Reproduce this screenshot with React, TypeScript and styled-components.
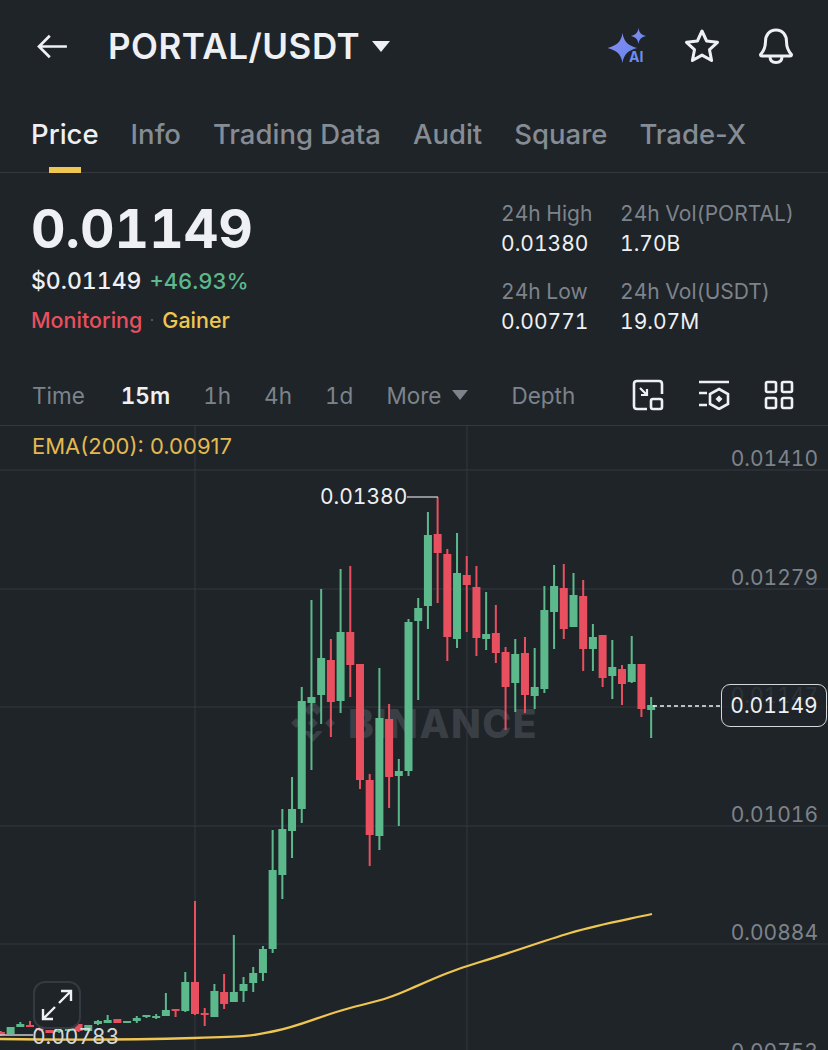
import styled, { createGlobalStyle } from "styled-components";

type Candle = [number, number, number, number, "g" | "r"];

const GREEN = "#5cb98c";
const RED = "#e8505f";
const YELLOW = "#efc651";

// wick top, wick bottom, body top, body bottom, in page pixels
const candles: Candle[] = [
  [1031, 1036, 1032, 1035, "r"], [1027, 1034, 1027, 1034, "g"], [1022, 1027, 1024, 1027, "g"], [1021, 1027, 1025, 1027, "r"],
  [1027, 1031, 1028, 1030, "r"], [1030, 1033, 1030, 1033, "r"], [1029, 1033, 1030, 1032, "g"], [1028, 1032, 1029, 1031, "g"],
  [1024, 1032, 1024, 1031, "r"], [1025, 1031, 1025, 1031, "g"], [1020, 1025, 1021, 1024, "g"], [1015, 1023, 1020, 1023, "g"],
  [1019, 1023, 1019, 1023, "r"], [1021, 1023, 1021, 1023, "g"], [1016, 1023, 1018, 1021, "g"], [1015, 1018, 1015, 1017, "g"],
  [1014, 1019, 1016, 1018, "g"], [993, 1016, 1010, 1016, "g"], [1009, 1017, 1009, 1011, "r"], [972, 1012, 982, 1011, "g"],
  [901, 1015, 982, 1014, "r"], [1008, 1026, 1013, 1015, "r"], [984, 1017, 991, 1017, "g"], [974, 1009, 992, 1004, "r"],
  [935, 1002, 992, 1002, "g"], [977, 1002, 984, 991, "g"], [967, 992, 973, 983, "g"], [946, 981, 949, 973, "g"],
  [830, 953, 870, 949, "g"], [809, 899, 829, 875, "g"], [777, 858, 809, 831, "g"], [687, 823, 701, 809, "g"],
  [600, 770, 697, 703, "g"], [589, 724, 658, 695, "g"], [639, 737, 660, 702, "r"], [569, 713, 632, 701, "g"],
  [566, 697, 632, 665, "r"], [664, 789, 664, 780, "r"], [774, 866, 780, 835, "r"], [668, 850, 718, 836, "g"],
  [704, 808, 719, 777, "r"], [759, 826, 771, 776, "g"], [619, 776, 622, 771, "g"], [598, 700, 608, 621, "g"],
  [512, 629, 535, 606, "g"], [497, 603, 534, 553, "r"], [549, 661, 554, 637, "r"], [533, 648, 573, 639, "g"],
  [556, 632, 575, 585, "r"], [566, 656, 587, 638, "r"], [592, 650, 634, 639, "g"], [605, 663, 633, 653, "r"],
  [647, 730, 652, 687, "r"], [639, 712, 654, 683, "g"], [637, 713, 653, 695, "r"], [648, 709, 687, 696, "g"],
  [586, 693, 610, 689, "g"], [565, 649, 586, 612, "g"], [564, 639, 588, 629, "r"], [573, 627, 595, 627, "g"],
  [580, 671, 596, 649, "r"], [624, 671, 637, 649, "g"], [635, 687, 635, 678, "r"], [640, 699, 667, 676, "g"],
  [665, 705, 669, 684, "r"], [636, 683, 664, 682, "g"], [664, 717, 664, 709, "r"], [697, 738, 705, 710, "g"],
];

const tabs = ["Price", "Info", "Trading Data", "Audit", "Square", "Trade-X"];
const intervals = ["Time", "15m", "1h", "4h", "1d"];
const axisLabels = ["0.01410", "0.01279", "0.01147", "0.01016", "0.00884", "0.00753"];

const GlobalStyle = createGlobalStyle`
  html, body {
    margin: 0;
    background: #1f2429;
  }
  body {
    font-family: Inter, "Noto Sans", sans-serif;
    font-variant-numeric: tabular-nums;
  }
`;

export default function App() {
  return (
    <>
      <GlobalStyle />
      <Page>
        <Header>
          <BackButton viewBox="0 0 36 30">
            <path d="M34 15H3M15 3 3 15l12 12" />
          </BackButton>
          <Pair>PORTAL/USDT</Pair>
          <PairCaret />
          <HeaderIcons>
            <AiIcon viewBox="0 0 42 36">
              <defs>
                <linearGradient id="ai" x1="0" y1="0" x2="1" y2="1">
                  <stop offset="0" stopColor="#8f8cf0" />
                  <stop offset="1" stopColor="#5f86ee" />
                </linearGradient>
              </defs>
              <path d="M15.500 5c1.500 9 5.500 12.500 14.500 15-9 2.500-13 6-14.500 15-1.500-9-5.500-12.500-15-15 9.500-2.500 13.500-6 15-15Z" fill="url(#ai)" />
              <path d="M31.500 0c.8 5 3 7 7.500 8-4.500 1-6.700 3-7.500 8-.8-5-3-7-7.500-8 4.500-1 6.700-3 7.500-8Z" fill="url(#ai)" />
              <text x="22" y="34" fontFamily="Inter, sans-serif" fontSize="14" fontWeight="700" fill="#6f8cf0">AI</text>
            </AiIcon>
            <svg width="36" height="36" viewBox="0 0 36 36" fill="none" stroke="#eef0f3" strokeWidth="3" strokeLinejoin="round">
              <path d="m18 3 4.600 10 10.900 1.300-8 7.400 2.100 10.800L18 27.100 8.400 32.500l2.100-10.800-8-7.400L13.400 13 18 3Z" />
            </svg>
            <svg width="36" height="38" viewBox="0 0 36 38" fill="none" stroke="#eef0f3" strokeWidth="3" strokeLinejoin="round">
              <path d="M18 3c-7 0-10.500 5.500-10.500 11.500 0 7-2 10-5 13 0 1 .5 1.500 1.500 1.500h28c1 0 1.500-.5 1.500-1.500-3-3-5-6-5-13C28.500 8.500 25 3 18 3Z" />
              <path d="M12 29.500c0 4 2.500 6 6 6s6-2 6-6" />
            </svg>
          </HeaderIcons>
        </Header>

        <TabBar>
          {tabs.map((tab, i) => (
            <Tab key={tab} $active={i === 0}>{tab}</Tab>
          ))}
        </TabBar>

        <Summary>
          <PriceBlock>
            <LastPrice>0.01149</LastPrice>
            <PriceLine>
              <span>$0.01149</span>
              <Change>+46.93%</Change>
            </PriceLine>
            <TagLine>
              <RedTag>Monitoring</RedTag>
              <TagDot />
              <YellowTag>Gainer</YellowTag>
            </TagLine>
          </PriceBlock>
          <Stats>
            <Stat><StatLabel>24h High</StatLabel><StatValue>0.01380</StatValue></Stat>
            <Stat><StatLabel>24h Vol(PORTAL)</StatLabel><StatValue>1.70B</StatValue></Stat>
            <Stat><StatLabel>24h Low</StatLabel><StatValue>0.00771</StatValue></Stat>
            <Stat><StatLabel>24h Vol(USDT)</StatLabel><StatValue>19.07M</StatValue></Stat>
          </Stats>
        </Summary>

        <Toolbar>
          {intervals.map((item) => (
            <Interval key={item} $active={item === "15m"}>{item}</Interval>
          ))}
          <Interval>
            More<MoreCaret />
          </Interval>
          <Depth>Depth</Depth>
          <ToolIcons>
            <svg width="32" height="32" viewBox="0 0 32 32" fill="none" stroke="#eef0f3" strokeWidth="2.600">
              <path d="M15 30H5q-3 0-3-3V5q0-3 3-3h22q3 0 3 3v10" />
              <path d="M8 9l7 7M15 10v6H9" strokeWidth="2.200" />
              <rect x="19" y="20" width="11" height="10" rx="2" />
            </svg>
            <svg width="32" height="30" viewBox="0 0 32 30" fill="none" stroke="#eef0f3" strokeWidth="2.600">
              <path d="M1 2h30M1 13h8M1 25h8" />
              <path d="m21 9 9 5v10l-9 5-9-5V14l9-5Z" />
              <path d="m21 15.500 3.500 3.500-3.500 3.500-3.500-3.500 3.500-3.500Z" fill="#eef0f3" stroke="none" />
            </svg>
            <svg width="30" height="30" viewBox="0 0 30 30" fill="none" stroke="#eef0f3" strokeWidth="2.600" strokeLinejoin="round">
              <rect x="2" y="2" width="10" height="10" rx="1.500" />
              <rect x="18" y="2" width="10" height="10" rx="1.500" />
              <rect x="2" y="18" width="10" height="10" rx="1.500" />
              <rect x="18" y="18" width="10" height="10" rx="1.500" />
            </svg>
          </ToolIcons>
        </Toolbar>

        <Chart>
          <Watermark>
            <svg width="50" height="50" viewBox="0 0 50 50" fill="#3a3f46">
              <path d="m25 3 9 9-5 5-4-4-4 4-5-5 9-9ZM8 20l5 5-5 5-5-5 5-5ZM42 20l5 5-5 5-5-5 5-5ZM25 20l5 5-5 5-5-5 5-5ZM16 33l5 0 4 4 4-4 5 0 0 1-9 10-9-10 0-1Z" />
            </svg>
            <WatermarkText>BINANCE</WatermarkText>
          </Watermark>
          <ChartSvg viewBox="0 426 828 624">
            {[470, 589, 707, 826, 944].map((y) => (
              <line key={y} x1="0" x2="828" y1={y} y2={y} stroke="#33383f" strokeWidth="1" />
            ))}
            {[195, 467].map((x) => (
              <line key={x} x1={x} x2={x} y1="426" y2="1050" stroke="#33383f" strokeWidth="1" />
            ))}
            <path
              d="M0 1039C60 1040 130 1040 194 1038S250 1036 275 1031 320 1016 350 1008 385 1000 410 989 450 971 480 962 540 942 570 933 625 920 652 914"
              fill="none"
              stroke={YELLOW}
              strokeWidth="2.300"
            />
            {candles.map(([top, bottom, bodyTop, bodyBottom, side], i) => {
              const x = 0.9 + 9.705 * i;
              const fill = side === "g" ? GREEN : RED;
              return (
                <g key={i} fill={fill}>
                  <rect x={x - 1} y={top} width="2" height={bottom - top} />
                  <rect x={x - 4} y={bodyTop} width="8" height={Math.max(bodyBottom - bodyTop, 2)} />
                </g>
              );
            })}
            <path d="M407 497h31" stroke="#c9ccd0" strokeWidth="1.300" />
            <path d="M0 1035h33" stroke="#c9ccd0" strokeWidth="1.300" />
            <path d="M653 706h68" stroke="#eef0f3" strokeWidth="1.300" strokeDasharray="4 3" />
          </ChartSvg>

          <Indicator>EMA(200): 0.00917</Indicator>
          <HighLabel>0.01380</HighLabel>
          <LowLabel>0.00783</LowLabel>
          <Axis>
            {axisLabels.map((label) => (
              <AxisLabel key={label}>{label}</AxisLabel>
            ))}
          </Axis>
          <PriceTag>0.01149</PriceTag>
          <ExpandButton>
            <svg width="32" height="32" viewBox="0 0 32 32" fill="none" stroke="#eef0f3" strokeWidth="2.400">
              <path d="M18 14 30 2M20 2h10v10M14 18 2 30M2 20v10h10" />
            </svg>
          </ExpandButton>
        </Chart>
      </Page>
    </>
  );
}

const Page = styled.div`
  width: 828px;
  height: 1050px;
  overflow: hidden;
  display: flex;
  flex-direction: column;
  background: #1f2429;
  color: #eef0f3;
`;

const Header = styled.header`
  height: 92px;
  flex: none;
  display: flex;
  align-items: center;
  padding: 0 34px 0 36px;
`;

const BackButton = styled.svg`
  width: 33px;
  height: 27px;
  margin-right: 39px;
  fill: none;
  stroke: #eef0f3;
  stroke-width: 3;
`;

const Pair = styled.div`
  font-size: 35px;
  font-weight: 600;
  letter-spacing: 0.5px;
`;

const PairCaret = styled.div`
  width: 0;
  height: 0;
  margin: 0 0 0 12px;
  border-left: 9px solid transparent;
  border-right: 9px solid transparent;
  border-top: 11px solid #eef0f3;
`;

const HeaderIcons = styled.div`
  margin-left: auto;
  display: flex;
  align-items: center;
  gap: 38px;
`;

const AiIcon = styled.svg`
  width: 42px;
  height: 36px;
  margin-right: -3px;
`;

const TabBar = styled.nav`
  height: 81px;
  box-sizing: border-box;
  flex: none;
  display: flex;
  align-items: flex-start;
  gap: 32px;
  padding: 24px 31px 0;
  border-bottom: 1px solid #33383f;
`;

const Tab = styled.div<{ $active?: boolean }>`
  position: relative;
  font-size: 27.500px;
  font-weight: 500;
  font-variant-numeric: normal;
  line-height: 36px;
  color: ${(p) => (p.$active ? "#eef0f3" : "#868c94")};

  &::after {
    content: "";
    display: ${(p) => (p.$active ? "block" : "none")};
    position: absolute;
    left: 18px;
    top: 51px;
    width: 32px;
    height: 6px;
    background: ${YELLOW};
  }
`;

const Summary = styled.section`
  height: 192px;
  flex: none;
  display: flex;
  justify-content: space-between;
  padding: 24px 34px 0 31px;
  box-sizing: border-box;
`;

const PriceBlock = styled.div`
  display: flex;
  flex-direction: column;
`;

const LastPrice = styled.div`
  font-size: 53.500px;
  font-weight: 700;
  line-height: 64px;
`;

const PriceLine = styled.div`
  display: flex;
  align-items: baseline;
  gap: 8px;
  margin-top: 2px;
  font-size: 23px;
  line-height: 36px;
  font-weight: 500;
`;

const Change = styled.span`
  font-size: 22px;
  color: ${GREEN};
`;

const TagLine = styled.div`
  display: flex;
  align-items: center;
  margin-top: 3px;
  font-size: 21.500px;
  font-weight: 500;
  line-height: 36px;
`;

const RedTag = styled.span`
  color: ${RED};
`;

const YellowTag = styled.span`
  color: ${YELLOW};
`;

const TagDot = styled.i`
  width: 2px;
  height: 2px;
  margin: 0 9px;
  background: #50555c;
`;

const Stats = styled.div`
  display: grid;
  grid-template-columns: 119px auto;
  grid-auto-rows: 77.500px;
  margin-top: 3px;
`;

const Stat = styled.div`
  display: flex;
  flex-direction: column;
  gap: 1px;
`;

const StatLabel = styled.span`
  font-size: 21px;
  line-height: 28px;
  color: #7d838b;
`;

const StatValue = styled.span`
  font-size: 21px;
  line-height: 30px;
  color: #eef0f3;
`;

const Toolbar = styled.div`
  height: 61px;
  box-sizing: border-box;
  flex: none;
  display: flex;
  align-items: center;
  gap: 33px;
  padding: 0 34px 0 32px;
  border-bottom: 1px solid #33383f;
`;

const Interval = styled.div<{ $active?: boolean }>`
  display: flex;
  align-items: center;
  font-size: 22.500px;
  font-weight: ${(p) => (p.$active ? 600 : 400)};
  color: ${(p) => (p.$active ? "#eef0f3" : "#7d838b")};

  &:first-child {
    margin-right: 3px;
  }
`;

const MoreCaret = styled.i`
  width: 0;
  height: 0;
  margin-left: 11px;
  border-left: 8px solid transparent;
  border-right: 8px solid transparent;
  border-top: 10px solid #7d838b;
`;

const Depth = styled(Interval)`
  margin-left: 10px;
`;

const ToolIcons = styled.div`
  margin-left: auto;
  display: flex;
  align-items: center;
  gap: 34px;
`;

const Chart = styled.div`
  position: relative;
  flex: 1;
  overflow: hidden;
`;

const ChartSvg = styled.svg`
  position: absolute;
  inset: 0;
  width: 828px;
  height: 624px;
`;

const Watermark = styled.div`
  position: absolute;
  left: 288px;
  top: 272px;
  display: flex;
  align-items: center;
  gap: 10px;
`;

const WatermarkText = styled.span`
  font-size: 39px;
  font-weight: 800;
  letter-spacing: 1.500px;
  color: #3a3f46;
`;

const Indicator = styled.div`
  position: absolute;
  left: 32px;
  top: 6px;
  font-size: 22px;
  font-variant-numeric: normal;
  line-height: 28px;
  color: #e3b950;
`;

const HighLabel = styled.div`
  position: absolute;
  left: 320px;
  top: 58px;
  font-size: 21px;
  line-height: 26px;
  color: #eef0f3;
`;

const LowLabel = styled.div`
  position: absolute;
  left: 32px;
  top: 598px;
  font-size: 21px;
  line-height: 26px;
  color: #d5d8db;
`;

const Axis = styled.div`
  position: absolute;
  right: 10px;
  top: 19px;
  display: flex;
  flex-direction: column;
  gap: 90.500px;
`;

const AxisLabel = styled.div`
  font-size: 21px;
  line-height: 28px;
  color: #7d838b;
`;

const PriceTag = styled.div`
  position: absolute;
  left: 721px;
  top: 258px;
  width: 106px;
  height: 43px;
  box-sizing: border-box;
  display: flex;
  align-items: center;
  justify-content: center;
  border: 1.500px solid #d5d8db;
  border-radius: 9px;
  background: rgba(31, 36, 41, 0.85);
  font-size: 21px;
  color: #eef0f3;
`;

const ExpandButton = styled.div`
  position: absolute;
  left: 33px;
  top: 555px;
  width: 48px;
  height: 48px;
  box-sizing: border-box;
  display: flex;
  align-items: center;
  justify-content: center;
  border: 2px solid #343a41;
  border-radius: 12px;
  background: rgba(31, 36, 41, 0.8);
`;
